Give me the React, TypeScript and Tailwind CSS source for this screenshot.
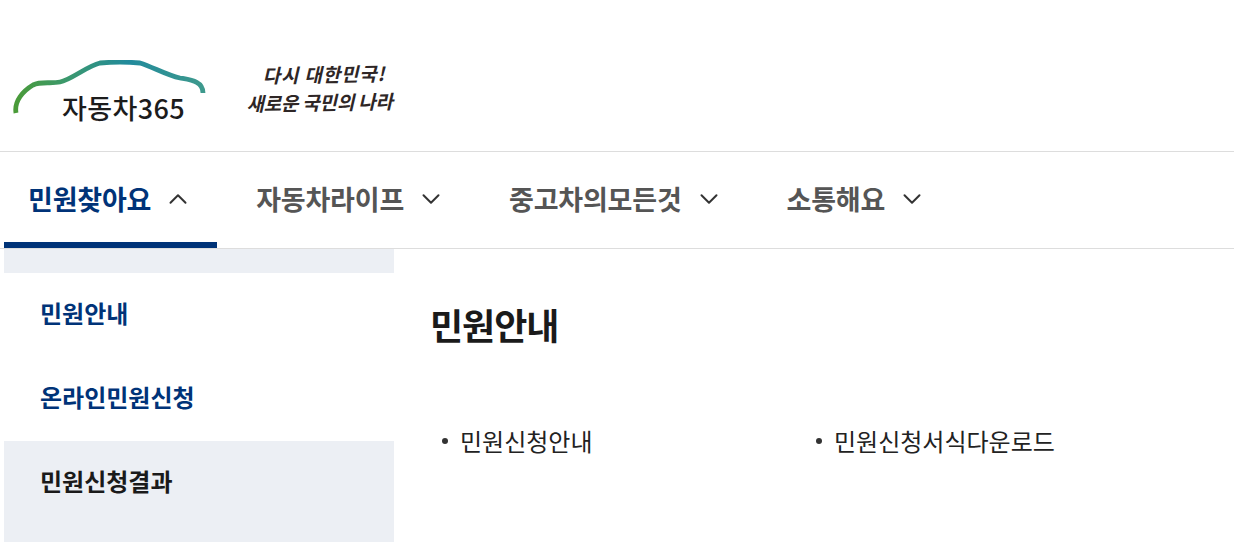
import { ChevronDown, ChevronUp } from "lucide-react";

const tabs = [
  { label: "민원찾아요", active: true },
  { label: "자동차라이프", active: false },
  { label: "중고차의모든것", active: false },
  { label: "소통해요", active: false },
];

const sideItems = [
  { label: "민원안내", color: "text-[#003378]", bg: "" },
  { label: "온라인민원신청", color: "text-[#003378]", bg: "" },
  { label: "민원신청결과", color: "text-[#1a1a1a]", bg: "bg-[#eceff4]" },
];

function CarLogo() {
  return (
    <div className="relative h-[66px] w-[196px]">
      <svg width="196" height="66" viewBox="0 0 196 66" fill="none">
        <defs>
          <linearGradient id="carLine" x1="0" y1="0" x2="196" y2="0" gradientUnits="userSpaceOnUse">
            <stop offset="0" stopColor="#4b9b34" />
            <stop offset="0.3" stopColor="#3a9870" />
            <stop offset="0.6" stopColor="#218a9c" />
            <stop offset="1" stopColor="#3f9a8c" />
          </linearGradient>
        </defs>
        <path
          d="M5 53C3 41 12 31 22 25C30 21 40 24 49 22C60 20 76 6 89 3C100 2 118 2 129 3C142 7 155 15 169 18C180 20 192 21 192 33"
          stroke="url(#carLine)"
          strokeWidth="4.800"
        />
      </svg>
      <span className="absolute top-[28px] left-[51px] text-[27px] leading-[40px] font-medium tracking-[0.4px] whitespace-nowrap text-[#1c1c1c]">
        자동차365
      </span>
    </div>
  );
}

export default function App() {
  return (
    <div className="h-[542px] w-[1234px] overflow-hidden bg-white font-['Noto_Sans_CJK_KR','Noto_Sans',sans-serif]">
      {/* 로고 */}
      <header className="flex h-[152px] items-start border-b border-[#dddddd] pt-[60px] pl-[11px]">
        <CarLogo />
        <div className="ml-[39px] flex -rotate-1 flex-col items-center text-[19px] leading-[28px] font-bold tracking-[-0.2px] whitespace-nowrap text-[#2e2626] italic">
          <span className="pl-[10px] tracking-[0.8px]">다시 대한민국!</span>
          <span>새로운 국민의 나라</span>
        </div>
      </header>

      {/* 메뉴 */}
      <nav className="flex h-[97px] gap-[15px] border-b border-[#dddddd] pl-1">
        {tabs.map((tab) => (
          <div
            key={tab.label}
            className={`flex h-full items-center gap-3 border-b-[6px] pt-1 pr-6 pl-6 ${
              tab.active ? "border-[#003378]" : "border-transparent"
            }`}
          >
            <span
              className={`text-[27px] leading-[38px] font-bold tracking-[-0.2px] whitespace-nowrap ${
                tab.active ? "text-[#003378]" : "text-[#555555]"
              }`}
            >
              {tab.label}
            </span>
            {tab.active ? (
              <ChevronUp size={30} strokeWidth={1.6} className="text-[#333333]" />
            ) : (
              <ChevronDown size={30} strokeWidth={1.6} className="text-[#333333]" />
            )}
          </div>
        ))}
      </nav>

      <div className="flex pl-1">
        {/* 사이드 메뉴 */}
        <aside className="w-[390px]">
          <div className="h-6 bg-[#eceff4]" />
          {sideItems.map((item) => (
            <div
              key={item.label}
              className={`h-[84px] pt-[22px] pl-9 text-[24px] leading-[36px] font-bold ${item.color} ${item.bg}`}
            >
              {item.label}
            </div>
          ))}
          <div className="h-[20px] bg-[#eceff4]" />
        </aside>

        {/* 본문 */}
        <main className="flex-1 pl-9">
          <h2 className="mt-[48px] text-[36px] leading-[54px] font-bold tracking-[-1px] text-[#1a1a1a]">민원안내</h2>
          <ul className="mt-[72px] flex">
            {["민원신청안내", "민원신청서식다운로드"].map((text) => (
              <li key={text} className="flex w-[374px] items-center pl-[12px] text-[24px] leading-[36px] text-[#222222]">
                <span className="mr-3 h-[6px] w-[6px] rounded-full bg-[#333333]" />
                {text}
              </li>
            ))}
          </ul>
        </main>
      </div>
    </div>
  );
}
